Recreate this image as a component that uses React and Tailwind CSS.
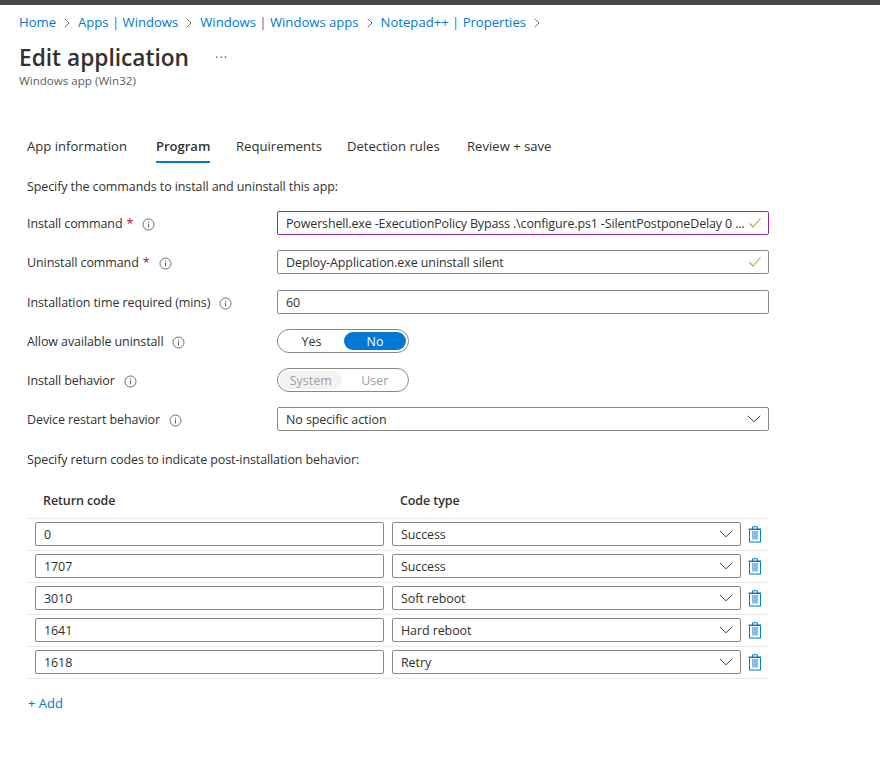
import React from "react";

const F = "font-['Open_Sans','Noto_Sans',sans-serif]";

function Info() {
  return (
    <svg width="13" height="13" viewBox="0 0 13 13" fill="none" className="shrink-0">
      <circle cx="6.5" cy="6.5" r="5.5" stroke="#605e5c" strokeWidth="0.9" />
      <path d="M6.5 5.6V9.4" stroke="#605e5c" strokeWidth="1" />
      <path d="M6.5 3.4V4.5" stroke="#605e5c" strokeWidth="1" />
    </svg>
  );
}

function Check() {
  return (
    <svg width="14" height="12" viewBox="0 0 14 12" fill="none" className="shrink-0">
      <path d="M1.5 6.5L5 10L12.5 1.5" stroke="#7fba44" strokeWidth="1.1" />
    </svg>
  );
}

function Chevron() {
  return (
    <svg width="14" height="8" viewBox="0 0 14 8" fill="none" className="shrink-0">
      <path d="M0.8 0.8L7 6.8L13.2 0.8" stroke="#484644" strokeWidth="1" />
    </svg>
  );
}

function Sep() {
  return (
    <svg width="6" height="10" viewBox="0 0 6 10" fill="none" className="shrink-0">
      <path d="M0.7 0.7L5 5L0.7 9.3" stroke="#605e5c" strokeWidth="0.9" />
    </svg>
  );
}

function Trash() {
  return (
    <svg width="14" height="17" viewBox="0 0 14 17" fill="none" className="shrink-0">
      <path d="M1.5 3.5H12.5V16H1.5Z" fill="#ffffff" stroke="#0078d4" strokeWidth="1" />
      <rect x="4" y="5" width="6" height="8.5" fill="#83bbea" />
      <path d="M0.5 3H13.5" stroke="#0078d4" strokeWidth="1" />
      <path d="M4.5 3V0.8H9.5V3" stroke="#0078d4" strokeWidth="1" />
    </svg>
  );
}

function Label({ children, required }) {
  return (
    <div className="w-[250px] pt-[2px] flex items-center text-[12.5px] tracking-[-0.1px] text-[#323130]">
      <span>{children}</span>
      {required && <span className="ml-[4px] text-[#a4262c]">*</span>}
      <span className="ml-[9px] flex">
        <Info />
      </span>
    </div>
  );
}

function Field({ children, check, chevron, purple, width = "w-[492px]" }) {
  return (
    <div
      className={`${width} h-6 flex items-center justify-between pl-2 pr-[6px] rounded-[2px] border text-[12.5px] tracking-[-0.1px] text-[#323130] bg-white ${
        purple ? "border-[#8a2da5]" : "border-[#8a8886]"
      }`}
    >
      <span className="whitespace-nowrap pt-[2px]">{children}</span>
      {check && <Check />}
      {chevron && <span className="flex mr-[1px]"><Chevron /></span>}
    </div>
  );
}

function Toggle({ left, right, disabled }) {
  return (
    <div
      className={`w-[132px] h-6 rounded-full border border-[#8a8886] flex items-center p-[2px] text-[12.5px] ${
        disabled ? "text-[#a19f9d]" : "text-[#323130]"
      }`}
    >
      <div
        className={`h-[18px] pt-[2px] rounded-full flex items-center justify-center ${
          disabled ? "w-[62px] mr-[2px] bg-[#f3f2f1]" : "w-[64px] mr-[1px]"
        }`}
      >
        {left}
      </div>
      <div
        className={`w-[63px] h-[18px] pt-[2px] rounded-full flex items-center justify-center ${
          disabled ? "" : "bg-[#0078d4] text-white"
        }`}
      >
        {right}
      </div>
    </div>
  );
}

function FormRow({ label, required, children, className }) {
  return (
    <div className={`flex items-center ${className}`}>
      <Label required={required}>{label}</Label>
      {children}
    </div>
  );
}

const codes = [
  ["0", "Success"],
  ["1707", "Success"],
  ["3010", "Soft reboot"],
  ["1641", "Hard reboot"],
  ["1618", "Retry"],
];

const crumbs = ["Home", "Apps | Windows", "Windows | Windows apps", "Notepad++ | Properties"];
const tabs = [
  ["App information", "w-[129px]"],
  ["Program", "w-[80px]"],
  ["Requirements", "w-[111px]"],
  ["Detection rules", "w-[120px]"],
  ["Review + save", "w-[90px]"],
];

export default function App() {
  return (
    <div className={`w-[880px] h-[774px] bg-white overflow-hidden ${F}`}>
      <div className="h-[5px] bg-[#484644]" />

      <div className="ml-[19px] mt-[9px] h-[18px] flex items-center gap-2 text-[13.1px] text-[#0078d4]">
        {crumbs.map((c) => (
          <React.Fragment key={c}>
            <span>{c}</span>
            <Sep />
          </React.Fragment>
        ))}
      </div>

      <div className="ml-[19px] mt-[10px] h-[31px] flex items-center">
        <span className="text-[22.7px] leading-8 font-semibold text-[#323130]">Edit application</span>
        <span className="ml-[26px] text-[13px] leading-none tracking-[1px] text-[#605e5c]">···</span>
      </div>
      <div className="ml-[19px] h-4 text-[11.6px] leading-4 text-[#605e5c]">Windows app (Win32)</div>

      <div className="ml-[27px] mt-[48px] h-[26px] flex text-[13.1px] text-[#323130]">
        {tabs.map(([t, w]) => (
          <div key={t} className={w}>
            <div
              className={`inline-block h-[26px] leading-[18px] ${
                t === "Program" ? "text-[13px] font-semibold border-b-2 border-[#0078d4]" : ""
              }`}
            >
              {t}
            </div>
          </div>
        ))}
      </div>

      <div className="ml-[27px] mt-[15px] h-[18px] text-[12.5px] tracking-[-0.1px] leading-[18px] text-[#323130]">
        Specify the commands to install and uninstall this app:
      </div>

      <FormRow label="Install command" required className="mt-[15px] ml-[27px]">
        <Field check purple>
          <span className="tracking-[-0.15px]">
            Powershell.exe -ExecutionPolicy Bypass .\configure.ps1 -SilentPostponeDelay 0 ...
          </span>
        </Field>
      </FormRow>
      <FormRow label="Uninstall command" required className="mt-[15px] ml-[27px]">
        <Field check>Deploy-Application.exe uninstall silent</Field>
      </FormRow>
      <FormRow label="Installation time required (mins)" className="mt-[16px] ml-[27px]">
        <Field>60</Field>
      </FormRow>
      <FormRow label="Allow available uninstall" className="mt-[15px] ml-[27px]">
        <Toggle left="Yes" right="No" />
      </FormRow>
      <FormRow label="Install behavior" className="mt-[15px] ml-[27px]">
        <Toggle left="System" right="User" disabled />
      </FormRow>
      <FormRow label="Device restart behavior" className="mt-[15px] ml-[27px]">
        <Field chevron>No specific action</Field>
      </FormRow>

      <div className="ml-[27px] mt-[20px] h-[18px] text-[12.5px] tracking-[-0.1px] leading-[18px] text-[#323130]">
        Specify return codes to indicate post-installation behavior:
      </div>

      <div className="ml-[27px] mt-[14px] w-[741px]">
        <div className="h-[36px] pt-[2px] flex items-center border-b border-[#edebe9] text-[12.5px] tracking-[-0.1px] font-semibold text-[#323130]">
          <div className="ml-[16px] w-[357px]">Return code</div>
          <div>Code type</div>
        </div>
        {codes.map(([code, type]) => (
          <div key={code} className="h-8 flex items-start pt-[3px] pl-2 border-b border-[#edebe9]">
            <Field width="w-[349px]">{code}</Field>
            <div className="ml-2">
              <Field width="w-[349px]" chevron>{type}</Field>
            </div>
            <div className="ml-[7px] mt-[4px] flex">
              <Trash />
            </div>
          </div>
        ))}
      </div>

      <div className="ml-[28px] mt-[15px] text-[13px] leading-[18px] text-[#0078d4]">+ Add</div>
    </div>
  );
}
